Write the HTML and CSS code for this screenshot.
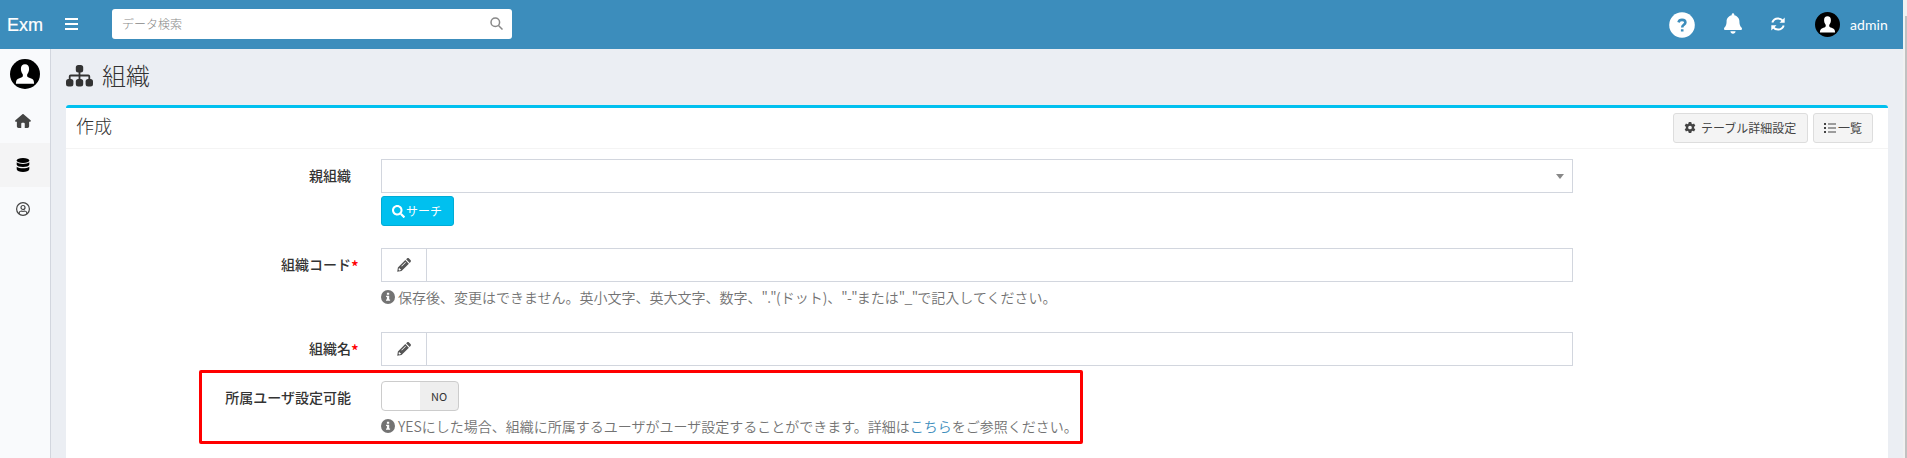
FILE: index.html
```html
<!DOCTYPE html>
<html lang="ja">
<head>
<meta charset="utf-8">
<title>組織</title>
<link rel="stylesheet" href="styles.css">
</head>
<body>
<svg class="defs" aria-hidden="true">
  <symbol id="avatar" viewBox="0 0 30 30"><circle cx="15" cy="15" r="15"/><path fill="#fff" d="M15 5.200c-2.700 0-4.200 1.900-4.100 4.800.1 2.200.7 3.800 1.700 5 .5.700.4 2.600-.3 3-1.200.8-3.200 1.100-4.600 2-1.400.8-1.700 2.500-1.800 4.700h18.200c-.1-2.200-.4-3.900-1.800-4.700-1.400-.9-3.400-1.200-4.600-2-.7-.4-.8-2.300-.3-3 1-1.200 1.600-2.800 1.700-5 .1-2.900-1.400-4.800-4.100-4.800z"/></symbol>
  <symbol id="info" viewBox="0 0 14 14"><circle cx="7" cy="7" r="7"/><path fill="#fff" d="M5.900 2.800h2.300v2H5.900zM5.100 5.700h3.100v3.700h.9v1.400H5V9.400h.9V7.100h-.8z"/></symbol>
  <symbol id="pencil" viewBox="0 0 14 14"><path fill-rule="evenodd" d="M.2 13.800l.7-4.300 7.400-7.400 3.600 3.600-7.400 7.400zM9.100 1.300L10 .5c.6-.6 1.400-.6 2 0l1.500 1.500c.6.6.6 1.400 0 2l-.8.900zM1.900 10.200l-.3 1.500.7.700 1.500-.3-.1-1-.8-.1-.1-.8zM4.300 8.100l.5.500 4.100-4.100-.5-.5z"/></symbol>
  <symbol id="search" viewBox="0 0 512 512"><path d="M505 442.700L405.300 343c-4.500-4.500-10.600-7-17-7H372c27.600-35.300 44-79.700 44-128C416 93.100 322.900 0 208 0S0 93.100 0 208s93.100 208 208 208c48.300 0 92.700-16.400 128-44v16.300c0 6.400 2.500 12.500 7 17l99.700 99.700c9.400 9.400 24.600 9.400 33.900 0l28.300-28.300c9.400-9.400 9.400-24.600.1-34zM208 336c-70.700 0-128-57.200-128-128 0-70.700 57.200-128 128-128 70.700 0 128 57.200 128 128 0 70.700-57.200 128-128 128z"/></symbol>
</svg>
<header class="navbar">
  <a class="logo">Exm</a>
  <svg class="menu" viewBox="0 0 13 12"><path d="M0 0h13v2H0zM0 5h13v2H0zM0 10h13v2H0z"/></svg>
  <div class="searchbox"><span>データ検索</span>
    <svg class="glass" viewBox="0 0 13 13"><circle cx="5.300" cy="5.300" r="4.300"/><path d="M8.500 8.500l4 4"/></svg>
  </div>
  <nav class="tools">
    <svg class="help" viewBox="0 0 26 26"><circle cx="13" cy="13" r="12.800"/><path class="mark" d="M9.500 10.300C9.900 8.800 11.200 7.900 13 7.900c2 0 3.400 1 3.400 2.600 0 2.300-3.200 2.400-3.200 4.900M13.200 17.200v2.400"/></svg>
    <svg class="bell" viewBox="0 0 448 512"><path d="M224 512c35.320 0 63.970-28.650 63.970-64H160.030c0 35.350 28.650 64 63.970 64zm215.390-149.710c-19.320-20.760-55.470-51.990-55.470-154.290 0-77.700-54.480-139.900-127.940-155.160V32c0-17.670-14.320-32-31.980-32s-31.980 14.330-31.980 32v20.840C118.560 68.100 64.080 130.300 64.080 208c0 102.300-36.150 133.530-55.470 154.290-6 6.450-8.660 14.160-8.610 21.710.11 16.400 12.980 32 32.100 32h383.800c19.120 0 32-15.600 32.100-32 .05-7.550-2.610-15.270-8.610-21.710z"/></svg>
    <svg class="sync" viewBox="0 0 14 14"><g fill="none" stroke="#fff" stroke-width="2"><path d="M1.300 5.500C2.200 2.800 4.300 1.400 7 1.400c1.900 0 3.500.7 4.700 2.200M12.700 8.500c-.9 2.700-3 4.100-5.700 4.100-1.900 0-3.500-.7-4.700-2.200"/></g><path d="M13.700.4v5.300H8.500zM.3 13.600V8.300h5.200z"/></svg>
    <svg class="face"><use href="#avatar"/></svg>
    <span class="user">admin</span>
  </nav>
</header>
<div class="frame">
  <aside class="sidebar">
    <svg class="portrait"><use href="#avatar"/></svg>
    <a class="side-item"><svg class="home" viewBox="0 0 576 512"><path d="M575.800 255.500c0 18-15 32.100-32 32.100h-32l.7 160.200c.2 35.500-28.500 64.300-64 64.300H352V352c0-17.700-14.300-32-32-32h-64c-17.700 0-32 14.300-32 32v160h-96.100c-35.300 0-64-28.700-64-64V287.600H32c-18 0-32-14-32-32.100 0-9 3-17 10-24L266.400 8c7-7 15-8 22-8s15 2 21 7l255.400 224.500c8 7 12 15 11 24z"/></svg></a>
    <a class="side-item active"><svg class="database" viewBox="0 0 13 14"><ellipse cx="6.500" cy="2.500" rx="6.300" ry="2.500"/><path d="M.2 4.300c1.400 1.300 3.700 1.700 6.300 1.700s4.900-.4 6.300-1.700v2.500C12.300 8.300 9.800 9 6.500 9S.7 8.300.2 6.800zM.2 8.700c1.400 1.200 3.700 1.600 6.300 1.600s4.900-.4 6.300-1.600v2.600c-.4 1.800-3 2.700-6.300 2.700S.6 13.100.2 11.300z"/></svg></a>
    <a class="side-item"><svg class="person" viewBox="0 0 14 14"><circle cx="7" cy="7" r="6.400"/><circle cx="7" cy="5.500" r="2"/><path d="M3.100 11.900V11c.2-1.300 1-2 2.200-2 1.200.4 2.200.4 3.400 0 1.200 0 2 .7 2.200 2v.9"/></svg></a>
  </aside>
  <main class="content">
    <h1 class="page-title">
      <svg class="sitemap" viewBox="0 0 27 22"><rect x="9.800" width="7.400" height="7.400" rx="2.500"/><rect y="14" width="7.400" height="7.600" rx="2.500"/><rect x="9.800" y="14" width="7.400" height="7.600" rx="2.500"/><rect x="19.600" y="14" width="7.400" height="7.600" rx="2.500"/><path fill="none" stroke="#333" stroke-width="1.800" d="M3.700 15v-3.500q0-1 1-1h17.600q1 0 1 1V15M13.500 6v9"/></svg>
      <span>組織</span>
    </h1>
    <section class="box">
      <div class="box-header">
        <h2>作成</h2>
        <div class="actions">
          <a class="btn config"><svg viewBox="0 0 24 24"><path fill-rule="evenodd" d="M9.500 0h5l.6 3.100 2 1.200 3-1.100 2.500 4.300-2.400 2.100v2.800l2.400 2.100-2.500 4.300-3-1.100-2 1.200-.6 3.100h-5l-.6-3.100-2-1.200-3 1.100-2.500-4.300 2.400-2.100V9.600L1.400 7.500l2.500-4.300 3 1.100 2-1.200zM12 7.300a3.700 3.700 0 100 7.400 3.700 3.700 0 000-7.400z"/></svg><span>テーブル詳細設定</span></a>
          <a class="btn list"><svg viewBox="0 0 12 10"><path d="M0 0h2v2H0zM4 .4h8v1.200H4zM0 4h2v2H0zM4 4.400h8v1.200H4zM0 8h2v2H0zM4 8.400h8v1.200H4z"/></svg><span>一覧</span></a>
        </div>
      </div>
      <form class="form">
        <div class="row parent">
          <label>親組織</label>
          <div class="field">
            <div class="select"><i class="caret"></i></div>
            <a class="btn-search"><svg><use href="#search"/></svg><span>サーチ</span></a>
          </div>
        </div>
        <div class="row code">
          <label>組織コード<b class="req">*</b></label>
          <div class="field">
            <div class="input"><span class="addon"><svg><use href="#pencil"/></svg></span></div>
            <p class="hint"><svg><use href="#info"/></svg><span>保存後、変更はできません。英小文字、英大文字、数字、<span class="tight">"."</span>(ドット)、<span class="tight">"-"</span>または<span class="tight">"_"</span>で記入してください。</span></p>
          </div>
        </div>
        <div class="row name">
          <label>組織名<b class="req">*</b></label>
          <div class="field"><div class="input"><span class="addon"><svg><use href="#pencil"/></svg></span></div></div>
        </div>
        <div class="row owner">
          <label>所属ユーザ設定可能</label>
          <div class="field">
            <div class="switch"><span>NO</span></div>
            <p class="hint"><svg><use href="#info"/></svg><span>YESにした場合、組織に所属するユーザがユーザ設定することができます。詳細は<a>こちら</a>をご参照ください。</span></p>
          </div>
          <div class="highlight"></div>
        </div>
      </form>
    </section>
  </main>
</div>
<div class="scrollbar"><div class="thumb"></div></div>
</body>
</html>
```
FILE: styles.css
```css
* { box-sizing: border-box; }
body {
  margin: 0;
  height: 458px;
  overflow: hidden;
  background: #ebeef3;
  color: #333;
  font: 14px/20px "Noto Sans CJK JP", sans-serif;
}
svg { display: block; flex: none; fill: currentColor; }
h1, h2, p { margin: 0; font-weight: 300; }
.defs { position: absolute; width: 0; height: 0; }

.navbar {
  display: flex;
  align-items: center;
  width: 1903px;
  height: 49px;
  padding: 0 15px 0 7px;
  background: #3c8dbc;
  color: #fff;
}
.logo { width: 58px; font: 18px/48px "Liberation Sans", Arial, sans-serif; -webkit-text-stroke: .2px #fff; }
.menu { width: 13px; height: 12px; margin-top: -2px; }
.searchbox {
  display: flex;
  align-items: center;
  justify-content: space-between;
  width: 400px;
  height: 30px;
  margin: -1px 0 0 34px;
  padding: 0 9px 0 10px;
  border-radius: 3px;
  background: #fff;
  color: #888;
  font-size: 12px;
  font-weight: 300;
}
.glass { width: 13px; height: 13px; margin-top: -1px; fill: none; stroke: #888; stroke-width: 1.5; }
.tools { display: flex; align-items: center; margin-left: auto; }
.help { width: 26px; height: 26px; }
.help .mark { fill: none; stroke: #3c8dbc; stroke-width: 2.600; }
.bell { width: 18px; height: 21px; margin: -2px 0 0 29px; }
.sync { width: 14px; height: 14px; margin: -1px 0 0 29px; }
.face { width: 25px; height: 25px; margin-left: 30px; color: #000; }
.user { margin-left: 10px; font: 14px/20px Lato, sans-serif; letter-spacing: .1px; }

.frame { display: flex; width: 1903px; height: 409px; }
.sidebar { width: 51px; flex: none; padding-top: 10px; border-right: 1px solid #d2d6de; background: #f9fafc; color: #444; }
.portrait { width: 30px; height: 30px; margin: 0 0 10px 10px; color: #000; }
.side-item { display: flex; align-items: center; height: 44px; padding-left: 15px; }
.side-item.active { background: #f4f4f5; color: #000; }
.home { width: 16px; height: 14px; }
.database { width: 14px; height: 14px; margin-left: 1px; }
.person { width: 14px; height: 14px; margin-left: 1px; fill: none; stroke: #444; stroke-width: 1.200; }

.content { flex: 1; padding: 15px 15px 0; }
.page-title { display: flex; align-items: center; height: 24px; font-size: 24px; line-height: 24px; }
.page-title span { padding-bottom: 2px; }
.sitemap { width: 27px; height: 22px; margin-right: 9px; }
.box { height: 370px; margin-top: 17px; border-top: 3px solid #00c0ef; border-radius: 3px; background: #fff; }
.box-header { display: flex; justify-content: space-between; height: 41px; padding: 5px 15px 0 10px; border-bottom: 1px solid #f4f4f4; }
.box-header h2 { font-size: 18px; line-height: 25px; }
.actions { display: flex; gap: 5px; }
.btn { display: flex; align-items: center; height: 30px; border: 1px solid #ddd; border-radius: 3px; background: #f4f4f4; color: #444; font-size: 12px; }
.config { width: 135px; padding-left: 10px; }
.config svg { width: 12px; height: 12px; margin-right: 5px; }
.list { width: 60px; padding-left: 10px; }
.list svg { width: 12px; height: 10px; margin-right: 2px; }

.form { padding-top: 10px; }
.row { display: flex; position: relative; }
.row label { width: 285px; margin-right: 30px; padding-top: 6px; text-align: right; font-weight: 500; white-space: nowrap; }
.row .req { display: inline-block; width: 7px; margin-right: -7px; color: #f00; font-size: 16px; font-weight: 500; line-height: 16px; vertical-align: -3px; }
.field { width: 1192px; }
.parent { height: 89px; }
.code { height: 84px; }
.name { height: 49px; }
.select, .input { display: flex; height: 34px; border: 1px solid #d2d6de; background: #fff; }
.select { align-items: center; justify-content: flex-end; padding-right: 8px; }
.caret { border: solid transparent; border-width: 5px 4px 0; border-top-color: #888; }
.btn-search { display: flex; align-items: center; width: 73px; height: 30px; margin-top: 3px; padding-left: 10px; border: 1px solid #00acd6; border-radius: 3px; background: #00c0ef; color: #fff; font-size: 12px; }
.btn-search svg { width: 13px; height: 13px; margin-right: 1px; }
.addon { display: flex; align-items: center; width: 45px; padding-left: 15px; border-right: 1px solid #d2d6de; color: #555; }
.addon svg { width: 14px; height: 14px; }
.hint { display: flex; align-items: center; margin-top: 5px; color: #737373; white-space: nowrap; font-weight: 350; }
.hint svg { width: 14px; height: 14px; margin-right: 3px; }
.hint a { color: #3c8dbc; }
.tight { letter-spacing: -.7px; }
.switch { width: 78px; height: 30px; border: 1px solid #ccc; border-radius: 4px; background: linear-gradient(90deg, #fff 38px, #eee 38px); }
.switch span { display: block; padding: 0 0 0 38px; text-align: center; font-size: 11px; font-weight: 400; line-height: 29px; }
.highlight { position: absolute; left: 133px; top: -11px; width: 884px; height: 74px; border: 3px solid #f00; border-radius: 2px; }

.scrollbar { position: absolute; right: 0; top: 0; width: 4px; height: 458px; padding: 16px 0 0 2px; background: #f1f1f1; }
.thumb { height: 442px; background: #c1c1c1; }
```
